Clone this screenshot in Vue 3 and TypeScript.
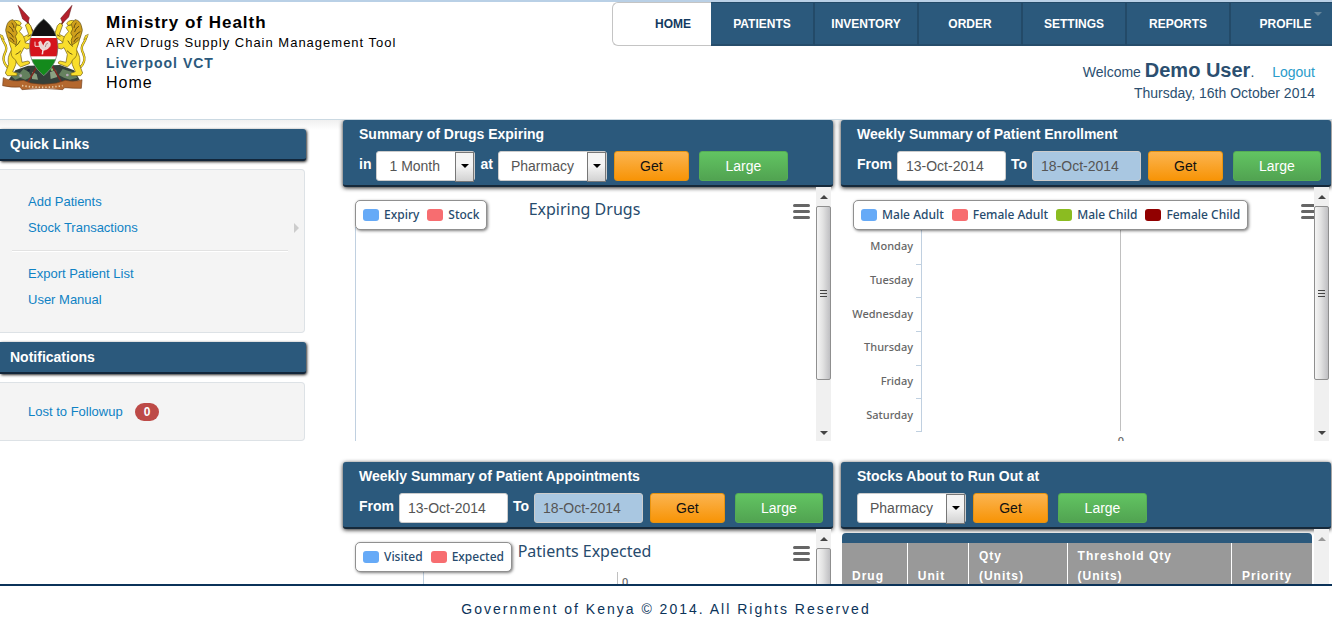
<script setup lang="ts">
interface SelectField { kind: 'select'; id: string; label: string; value: string; options: string[]; narrow?: boolean }
interface DateField { kind: 'date'; id: string; label: string; value: string; locked?: boolean }
interface Series { name: string; color: string }
interface Panel {
  id: string
  title: string
  fields: (SelectField | DateField)[]
  chartTitle?: string
  legend?: Series[]
}

const BLUE = '#66aaf7'
const RED = '#f76d70'

const navItems: string[] = ['Home', 'Patients', 'Inventory', 'Order', 'Settings', 'Reports', 'Profile']
const days: string[] = ['Monday', 'Tuesday', 'Wednesday', 'Thursday', 'Friday', 'Saturday']
const columns: string[] = ['Drug', 'Unit', 'Qty\n(Units)', 'Threshold Qty\n(Units)', 'Priority']
const lionSides: string[] = ['', 'translate(264 0) scale(-1 1)']

const dates = (prefix: string): DateField[] => [
  { kind: 'date', id: `${prefix}-from`, label: 'From', value: '13-Oct-2014' },
  { kind: 'date', id: `${prefix}-to`, label: 'To', value: '18-Oct-2014', locked: true },
]
const stores: string[] = ['Pharmacy', 'Main Store']

const panels: Panel[] = [
  {
    id: 'expiry',
    title: 'Summary of Drugs Expiring',
    fields: [
      { kind: 'select', id: 'expiry-period', label: 'in', value: '1 Month', options: ['1 Month', '3 Months', '6 Months'], narrow: true },
      { kind: 'select', id: 'expiry-store', label: 'at', value: 'Pharmacy', options: stores },
    ],
    chartTitle: 'Expiring Drugs',
    legend: [{ name: 'Expiry', color: BLUE }, { name: 'Stock', color: RED }],
  },
  {
    id: 'enrollment',
    title: 'Weekly Summary of Patient Enrollment',
    fields: dates('enrollment'),
    legend: [
      { name: 'Male Adult', color: BLUE },
      { name: 'Female Adult', color: RED },
      { name: 'Male Child', color: '#8bbc21' },
      { name: 'Female Child', color: '#910000' },
    ],
  },
  {
    id: 'appointments',
    title: 'Weekly Summary of Patient Appointments',
    fields: dates('appointments'),
    chartTitle: 'Patients Expected',
    legend: [{ name: 'Visited', color: BLUE }, { name: 'Expected', color: RED }],
  },
  {
    id: 'stocks',
    title: 'Stocks About to Run Out at',
    fields: [{ kind: 'select', id: 'stocks-store', label: '', value: 'Pharmacy', options: stores }],
  },
]
</script>

<template>
  <div class="page">
    <header class="top">
      <svg class="arms" viewBox="0 0 300 300" aria-hidden="true">
        <!-- ground -->
        <path d="M26 236 L46 208 L84 194 L180 192 L222 208 L240 238 L180 252 L84 252Z" fill="#34403a" />
        <path d="M34 226l12-14 14 4 10-12 16 8 8 16-18 8-16-6-14 6z" fill="#63805e" />
        <path d="M176 222l12-18 18 6 16 4 10 16-22 6-18-6z" fill="#66815f" />
        <path d="M96 212l14 8 4 16-18-2zM150 214l18-8 4 22-20 6z" fill="#8aa182" />
        <circle cx="62" cy="224" r="4" fill="#b9a9bb" /><circle cx="202" cy="222" r="4" fill="#b9a9bb" />
        <circle cx="156" cy="206" r="4" fill="#8dbb6a" /><circle cx="86" cy="208" r="4" fill="#1e2633" />
        <!-- spear shafts -->
        <path d="M70 40 L188 250M202 40 L80 250" stroke="#7a2a22" stroke-width="5" />
        <!-- scroll band -->
        <path d="M10 230 Q36 244 70 238 L92 246 Q128 254 170 246 L196 238 Q226 244 246 236 L244 262 Q220 262 194 260 L188 266 Q130 258 66 266 L60 258 Q34 260 8 254Z" fill="#b4682f" stroke="#74401d" stroke-width="2" />
        <path d="M66 254 Q130 264 188 254" fill="none" stroke="#e8c9a3" stroke-width="5" stroke-dasharray="4 6" />
        <!-- lions -->
        <g v-for="side in lionSides" :key="side" :transform="side" stroke-linejoin="round" stroke-linecap="round">
          <path d="M24 200 Q4 180 14 158 Q24 140 13 126 Q6 114 5 106" fill="none" stroke="#7d6414" stroke-width="7" />
          <path d="M24 200 Q4 180 14 158 Q24 140 13 126 Q6 114 5 106" fill="none" stroke="#f8dd2a" stroke-width="4" />
          <path d="M0 100 L8 104 L13 116 L4 112Z" fill="#f8dd2a" stroke="#7d6414" stroke-width="1.5" />
          <g fill="#f9de2c" stroke="#6f5a14" stroke-width="2">
            <path d="M34 148 Q20 170 26 190 L16 216 L22 224 L50 224 L52 217 L38 212 Q50 190 50 174Z" />
            <path d="M70 108 L86 100 L76 72 L84 66 L92 74 L100 100 Q98 112 86 116 L70 128Z" />
            <path d="M40 60 Q54 54 64 66 L60 74 L66 80 L58 92 Q74 104 76 126 L98 130 Q108 132 104 138 L80 144 L72 140 Q66 152 62 160 L66 184 L84 180 Q92 182 88 188 L62 198 Q50 190 46 176 Q30 168 34 144 Q22 118 24 92Z" />
          </g>
          <path d="M38 56 Q24 58 20 74 Q14 88 20 100 Q22 116 36 124 L48 132 Q54 118 46 106 L52 96 L46 84 L50 70Z" fill="#cf9f1c" stroke="#5f4c12" stroke-width="2" />
          <path d="M28 76q10 6 12 16M24 92q12 6 16 16M36 66q6 8 6 14M30 110q8 2 12 12M60 120q-6 12-14 16M62 150q-8 8-14 10M52 72l6 1M84 106l8-4" fill="none" stroke="#4d3d10" stroke-width="2.5" />
        </g>
        <!-- spear heads -->
        <path d="M54 13 L88 50 L84 66 L68 54Z" fill="#b3202c" stroke="#5f1a1c" stroke-width="1.5" />
        <path d="M216 13 L206 48 L188 66 L182 52Z" fill="#b3202c" stroke="#5f1a1c" stroke-width="1.5" />
        <!-- shield -->
        <clipPath id="shield"><path d="M131 54 Q174 88 174 138 Q174 188 131 224 Q88 188 88 138 Q88 88 131 54Z" /></clipPath>
        <g clip-path="url(#shield)">
          <rect x="84" y="50" width="94" height="180" fill="#fff" />
          <rect x="84" y="50" width="94" height="55" fill="#121212" />
          <rect x="84" y="111" width="94" height="55" fill="#d5141c" />
          <rect x="84" y="175" width="94" height="55" fill="#148a1c" />
        </g>
        <path d="M131 54 Q174 88 174 138 Q174 188 131 224 Q88 188 88 138 Q88 88 131 54Z" fill="none" stroke="#6b7a74" stroke-width="2" />
        <path d="M105 122v14h14M118 134q4 8 12 6l-4 20M130 140l-2 20" fill="none" stroke="#fff" stroke-width="2.5" />
        <path d="M116 124l6-4 4 8 4 8q4-16 14-16 10 4 6 16-6 10-18 12-12-2-14-14z" fill="#ead4d2" stroke="#fff" stroke-width="1.5" />
        <path d="M136 138q0-10 8-12" fill="none" stroke="#8d6a6a" stroke-width="2" />
      </svg>
      <div class="brand">
        <h1>Ministry of Health</h1>
        <p class="tool">ARV Drugs Supply Chain Management Tool</p>
        <p class="facility">Liverpool VCT</p>
        <p class="crumb">Home</p>
      </div>
      <div class="top-right">
        <nav class="nav">
          <a v-for="item in navItems" :key="item" href="#" :class="['nav-item', item.toLowerCase()]">{{ item }}</a>
        </nav>
        <div class="user">
          <p>Welcome <strong>Demo User</strong>. <a href="#">Logout</a></p>
          <p>Thursday, 16th October 2014</p>
        </div>
      </div>
    </header>

    <main class="body">
      <aside class="sidebar">
        <h2>Quick Links</h2>
        <ul class="box">
          <li><a href="#">Add Patients</a></li>
          <li class="has-sub"><a href="#">Stock Transactions</a></li>
          <li class="divider" role="separator"></li>
          <li><a href="#">Export Patient List</a></li>
          <li><a href="#">User Manual</a></li>
        </ul>
        <h2>Notifications</h2>
        <ul class="box notes">
          <li><a href="#">Lost to Followup</a><span class="badge">0</span></li>
        </ul>
      </aside>

      <div class="dashboard">
        <section v-for="panel in panels" :key="panel.id" class="panel">
          <form class="panel-head" @submit.prevent>
            <h3>{{ panel.title }}</h3>
            <div class="controls">
              <template v-for="field in panel.fields" :key="field.id">
                <label v-if="field.label" :for="field.id">{{ field.label }}</label>
                <span v-if="field.kind === 'select'" :class="['select', { narrow: field.narrow }]">
                  <select :id="field.id" :value="field.value" :aria-label="field.label || panel.title">
                    <option v-for="option in field.options" :key="option">{{ option }}</option>
                  </select>
                </span>
                <input v-else :id="field.id" type="text" :value="field.value" :disabled="field.locked" />
              </template>
              <button type="submit" class="get">Get</button>
              <button type="button" class="large">Large</button>
            </div>
          </form>

          <div class="panel-body">
            <div v-if="panel.legend" class="chart">
              <svg v-if="panel.id === 'expiry'" class="plot" width="472" height="254">
                <path d="M12.5 40V254" class="axis" />
              </svg>
              <svg v-else-if="panel.id === 'enrollment'" class="plot" width="473" height="254">
                <path d="M279.5 40V244" class="grid" />
                <path d="M80.5 40V244M75 77.5h5M75 110.5h5M75 144.5h5M75 178.5h5M75 211.5h5M75 244.5h6" class="axis" />
                <text v-for="(day, i) in days" :key="day" x="72" :y="63 + Math.round(i * 33.8)" text-anchor="end">{{ day }}</text>
                <text x="280" y="258" text-anchor="middle">0</text>
              </svg>
              <svg v-else class="plot" width="472" height="254">
                <path d="M80.5 43V254" class="axis" />
                <path d="M274.5 43V254" class="grid" />
                <text x="279" y="57">0</text>
              </svg>
              <div class="legend">
                <span v-for="series in panel.legend" :key="series.name" class="series">
                  <i :style="{ background: series.color }"></i>{{ series.name }}
                </span>
              </div>
              <h4 v-if="panel.chartTitle">{{ panel.chartTitle }}</h4>
              <button type="button" class="menu" :class="{ shifted: !panel.chartTitle }" aria-label="Chart menu"><i></i><i></i><i></i></button>
            </div>
            <div v-else class="table-wrap">
              <table>
                <thead>
                  <tr><th v-for="column in columns" :key="column" scope="col">{{ column }}</th></tr>
                </thead>
              </table>
            </div>
            <div class="scroll" :class="{ idle: !panel.legend }">
              <span class="arrow up"></span>
              <span v-if="panel.legend" class="thumb"><i></i><i></i><i></i></span>
              <span class="arrow down"></span>
            </div>
          </div>
        </section>
      </div>
    </main>

    <footer class="footer">Government of Kenya © 2014. All Rights Reserved</footer>
  </div>
</template>

<style>
body {
  margin: 0;
  background: #fff;
}
</style>

<style scoped>
* {
  box-sizing: border-box;
}
h1, h2, h3, h4, p, ul {
  margin: 0;
  padding: 0;
}
a {
  color: #0f82c4;
  text-decoration: none;
}
.page {
  display: flex;
  flex-direction: column;
  height: 100vh;
  overflow: hidden;
  font: 14px/20px "Liberation Sans", Arial, sans-serif;
  color: #2b4f70;
}

/* header */
.top {
  display: flex;
  flex: none;
  height: 120px;
  border-top: 2px solid #b9d0e6;
  border-bottom: 1px solid #cbd9e2;
}
.arms {
  flex: none;
  width: 100px;
  height: 100px;
  margin-top: -1px;
}
.brand {
  flex: 1;
  padding: 11px 0 0 6px;
  color: #000;
  letter-spacing: 1px;
  white-space: nowrap;
}
.brand h1 {
  font-size: 17px;
  line-height: 20px;
}
.tool {
  font-size: 13px;
}
.facility {
  color: #2b597c;
  font-weight: bold;
}
.crumb {
  font-size: 16px;
}
.nav {
  display: flex;
  justify-content: flex-end;
}
.nav-item {
  width: 104px;
  height: 44px;
  background: #2b597c;
  border-top: 1px solid #234a68;
  border-bottom: 2px solid #264d6b;
  border-right: 2px solid #234a68;
  color: #fff;
  font-size: 12px;
  font-weight: bold;
  line-height: 42px;
  text-align: center;
  text-transform: uppercase;
}
.nav-item.home {
  width: 99px;
  padding-left: 22px;
  background: #fff;
  border: 1px solid #c4c4c4;
  border-right: 0;
  border-radius: 6px 0 0 6px;
  color: #123a60;
}
.nav-item.profile {
  position: relative;
  width: 101px;
  padding-left: 8px;
  border-right: 0;
}
.nav-item.profile::after {
  content: "";
  position: absolute;
  top: 9px;
  right: 10px;
  border: 4px solid transparent;
  border-top-color: #66869b;
  border-bottom: 0;
}
.user {
  padding: 14px 17px 0 0;
  text-align: right;
}
.user p {
  line-height: 21px;
}
.user strong {
  font-size: 20px;
  line-height: 20px;
}
.user a {
  margin-left: 14px;
  color: #2a9bca;
}

/* main area */
.body {
  display: flex;
  flex: 1;
  min-height: 0;
  overflow: hidden;
  background: linear-gradient(#f0f0f0, #fff 10px);
}
.sidebar {
  flex: none;
  width: 306px;
  padding-top: 9px;
}
.sidebar h2 {
  height: 32px;
  padding-left: 10px;
  background: #2b597c;
  border-bottom: 2px solid #12263a;
  border-radius: 0 3px 3px 0;
  box-shadow: 1px 1px 3px #222;
  color: #fff;
  font-size: 14px;
  line-height: 30px;
}
.box {
  margin: 8px 1px 9px 0;
  padding: 19px 16px 19px 12px;
  background: #f4f4f4;
  border: 1px solid #dde2e6;
  border-left: 0;
  border-radius: 0 4px 4px 0;
  list-style: none;
  font-size: 13px;
}
.box li {
  height: 26px;
  padding-left: 16px;
  line-height: 26px;
}
.box .divider {
  height: 2px;
  margin: 9px 0;
  border-top: 1px solid #e2e2e2;
  background: #fff;
}
.has-sub {
  display: flex;
  align-items: center;
  justify-content: space-between;
  margin-right: -11px;
}
.has-sub::after {
  content: "";
  border: 5px solid transparent;
  border-left-color: #ccc;
  border-right: 0;
}
.box.notes {
  padding: 16px 16px 15px 12px;
}
.badge {
  display: inline-block;
  margin-left: 12px;
  padding: 0 9px;
  background: #bd4a47;
  border-radius: 9px;
  color: #fff;
  font-weight: bold;
  font-size: 12px;
  line-height: 18px;
}

/* dashboard */
.dashboard {
  display: grid;
  flex: 1;
  grid-template-columns: 1fr 1fr;
  align-content: start;
  gap: 21px 8px;
  min-width: 0;
  padding: 0 1px 0 37px;
}
.panel {
  min-width: 0;
}
.panel-head {
  padding: 3px 10px 4px 16px;
  background: #2b597c;
  border-bottom: 2px solid #16293a;
  border-radius: 3px;
  box-shadow: 0 1px 4px #222;
  color: #fff;
  font-weight: bold;
}
.panel-head h3 {
  margin-bottom: 6px;
  font-size: 14px;
  line-height: 22px;
}
.controls {
  display: flex;
  align-items: center;
  gap: 5px;
}
.controls label {
  line-height: 26px;
  align-self: flex-start;
}
.controls input,
.controls select,
.controls button {
  height: 30px;
  margin: 0;
  border: 1px solid #ccc;
  border-radius: 3px;
  font: 14px/20px "Liberation Sans", Arial, sans-serif;
}
.controls input {
  width: 109px;
  padding: 0 8px;
  background: #fff;
  color: #555;
}
.controls input:disabled {
  background: #a9c7e1;
}
.select {
  position: relative;
  width: 109px;
}
.select.narrow {
  width: 99px;
}
.select select {
  display: block;
  width: 100%;
  padding: 0 20px 0 12px;
  appearance: none;
  background: #fff;
  color: #555;
}
.select::before {
  content: "";
  position: absolute;
  top: 1px;
  right: 1px;
  width: 17px;
  height: 28px;
  border: 1px solid #777;
  background: linear-gradient(#f4f4f4 45%, #d2d2d2);
  pointer-events: none;
}
.select::after {
  content: "";
  position: absolute;
  top: 13px;
  right: 6px;
  border: 4px solid transparent;
  border-top-color: #000;
  border-bottom: 0;
  pointer-events: none;
}
.controls button.get {
  width: 75px;
  margin-left: 2px;
  border-color: #e8930f;
  background: linear-gradient(#fbb450, #f89406);
  color: #111;
}
.controls button.large {
  width: 89px;
  margin-left: 5px;
  border-color: #55ad55;
  background: linear-gradient(#62c462, #51a351);
  color: #fff;
}
.panel-body {
  display: flex;
  height: 254px;
  padding-right: 2px;
}

/* charts */
.chart {
  position: relative;
  flex: 1;
  min-width: 0;
  overflow: hidden;
  font-family: "Noto Sans", "Open Sans", sans-serif;
}
.plot {
  position: absolute;
  inset: 0;
}
.axis {
  fill: none;
  stroke: #c0d0e0;
}
.grid {
  fill: none;
  stroke: #c0c0c0;
}
.plot text {
  fill: #666;
  font-size: 11px;
  font-weight: 500;
}
.legend {
  position: absolute;
  top: 13px;
  left: 12px;
  display: flex;
  gap: 8px;
  padding: 0 7px;
  border: 1px solid #909090;
  border-radius: 5px;
  background: #fff;
  box-shadow: 1px 1px 3px rgba(0, 0, 0, 0.5);
  color: #274b6d;
  font-size: 12px;
  font-weight: 500;
  line-height: 28px;
  white-space: nowrap;
}
.series {
  display: flex;
  align-items: center;
  gap: 5px;
}
.series i {
  width: 16px;
  height: 12px;
  border-radius: 3px;
}
.chart h4 {
  padding: 10px 0 0 10px;
  color: #274b6d;
  font-size: 16px;
  font-weight: normal;
  line-height: 24px;
  text-align: center;
}
.menu {
  position: absolute;
  top: 17px;
  right: 6px;
  display: grid;
  gap: 3px;
  width: 17px;
  padding: 0;
  border: 0;
  background: none;
}
.menu.shifted {
  right: -4px;
}
.menu i {
  height: 3px;
  border-radius: 2px;
  background: #666;
}

/* scroll rail */
.scroll {
  display: flex;
  flex: none;
  flex-direction: column;
  width: 15px;
  background: #f0f0f0;
}
.arrow {
  display: flex;
  align-items: center;
  justify-content: center;
  flex: none;
  height: 19px;
}
.arrow::before {
  content: "";
  border: 4px solid transparent;
}
.up::before {
  border-bottom-color: #444;
  border-top: 0;
}
.down {
  height: 16px;
  margin-top: auto;
}
.down::before {
  border-top-color: #444;
  border-bottom: 0;
}
.idle .up::before {
  border-bottom-color: #999;
}
.thumb {
  display: flex;
  flex-direction: column;
  align-items: center;
  justify-content: center;
  gap: 2px;
  height: 174px;
  border: 1px solid #8f8f8f;
  border-radius: 2px;
  background: linear-gradient(90deg, #f5f5f5, #e2e2e2 45%, #bfbfc2);
}
.thumb i {
  width: 7px;
  height: 1px;
  background: #444;
}

/* stock table */
.table-wrap {
  flex: 1;
  padding: 4px 2px 0 1px;
}
table {
  width: 100%;
  border-collapse: separate;
  border-spacing: 0;
  border-top: 10px solid #2b597c;
  border-radius: 4px 4px 0 0;
  color: #fff;
  letter-spacing: 1px;
}
th {
  padding: 3px 10px 4px;
  background: #999;
  border-right: 1px solid #fff;
  font-size: 12px;
  line-height: 20px;
  text-align: left;
  vertical-align: bottom;
  white-space: pre-line;
}
th:last-child {
  border-right: 0;
}
th:nth-child(1) { width: 14%; }
th:nth-child(2) { width: 13%; }
th:nth-child(3) { width: 21%; }
th:nth-child(4) { width: 35%; }
th:nth-child(5) { width: 17%; }

/* footer */
.footer {
  flex: none;
  padding: 13px 0 16px;
  border-top: 2px solid #0b3359;
  background: #fff;
  color: #0b3359;
  letter-spacing: 2px;
  text-align: center;
}
</style>
